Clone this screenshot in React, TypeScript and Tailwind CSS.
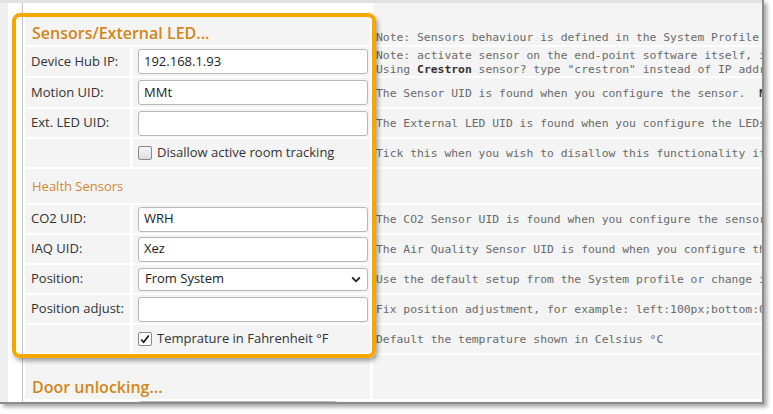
import React from "react";

const cell = "bg-[#f4f4f4]";
const label = `${cell} flex items-center pl-[6px] text-[13px] text-[#333] whitespace-nowrap`;
const desc = `${cell} flex items-center pl-[3px] overflow-hidden whitespace-pre text-[11.36px] leading-[14px] text-[#6a6a6a]`;
const inputCell = `${cell} flex items-center pl-[5px] pr-[2px]`;
const mono = { fontFamily: '"DejaVu Sans Mono", "Liberation Mono", monospace' };

function TextInput({ value }: { value: string }) {
  return (
    <div className="w-[230px] h-[25px] bg-white border border-[#b8b8b8] rounded-[3px] flex items-center pl-[5px] text-[13px] text-[#222]">
      {value}
    </div>
  );
}

function Check({ checked, text }: { checked: boolean; text: string }) {
  return (
    <div className="flex items-center gap-[5px] text-[13px] text-[#333]">
      <div
        className={`w-[14px] h-[14px] border border-[#8a8a8a] rounded-[2px] flex items-center justify-center ${
          checked ? "bg-white" : "bg-gradient-to-b from-[#f4f4f4] to-[#dedede]"
        }`}
      >
        {checked && (
          <svg width="12" height="12" viewBox="0 0 12 12">
            <path d="M2.2 6.4 L4.6 9.2 L9.8 2.4" fill="none" stroke="#111" strokeWidth="1.6" />
          </svg>
        )}
      </div>
      <span>{text}</span>
    </div>
  );
}

export default function App() {
  return (
    <div
      className="relative w-[773px] h-[414px] bg-white overflow-hidden"
      style={{ fontFamily: '"Open Sans", "Noto Sans", sans-serif' }}
    >
      <div className="w-[764px] h-[404px] border-r-2 border-b-2 border-[#8c8c8c] shadow-[3px_3px_4px_rgba(0,0,0,0.35)] flex flex-col overflow-hidden bg-white">
        <div className="h-[3px] shrink-0 bg-[#e2e2e2]" />
        <div className="flex flex-1 min-h-0">
          <div className="w-[8px] bg-[#efefef]" />
          <div className="w-[14px] bg-white" />
          <div className="w-px bg-[#c4c4c4]" />
          <div className="flex-1 min-w-0 pl-[2px] grid grid-cols-[105px_237px_minmax(0,1fr)] grid-rows-[10px_30px_29px_29px_28px_28px_34px_28px_28px_28px_28px_28px_44px_28px] gap-x-[3px] gap-y-[2px] content-start bg-white overflow-hidden">
            {/* top spacer */}
            <div className="col-span-2" />
            <div className={`${cell} row-span-2 flex items-end pb-[1px] pl-[3px] overflow-hidden whitespace-pre text-[11.36px] leading-[14px] text-[#6a6a6a]`} style={mono}>
              Note: Sensors behaviour is defined in the System Profile settings.
            </div>
            {/* header */}
            <div className={`${cell} col-span-2 flex items-end pl-[7px] text-[16px] leading-[23px] font-semibold text-[#d1861a] whitespace-nowrap`}>
              Sensors/External LED...
            </div>

            <div className={label}>Device Hub IP:</div>
            <div className={inputCell}><TextInput value="192.168.1.93" /></div>
            <div className={`${desc} flex-col !items-start justify-center`} style={mono}>
              <div>Note: activate sensor on the end-point software itself, if needed.</div>
              <div>
                Using <b className="text-[#333]">Crestron</b> sensor? type "crestron" instead of IP address.
              </div>
            </div>

            <div className={label}>Motion UID:</div>
            <div className={inputCell}><TextInput value="MMt" /></div>
            <div className={desc} style={mono}>
              {"The Sensor UID is found when you configure the sensor.  "}
              <b className="text-[#333]">Note:</b>
              {" see the manual."}
            </div>

            <div className={label}>Ext. LED UID:</div>
            <div className={inputCell}><TextInput value="" /></div>
            <div className={desc} style={mono}>
              The External LED UID is found when you configure the LEDs in the software.
            </div>

            <div className={cell} />
            <div className={inputCell}><Check checked={false} text="Disallow active room tracking" /></div>
            <div className={desc} style={mono}>
              Tick this when you wish to disallow this functionality if required.
            </div>

            <div className={`${cell} col-span-2 flex items-center pl-[7px] pt-[2px] text-[13px] text-[#d08a33]`}>
              Health Sensors
            </div>
            <div className={cell} />

            <div className={label}>CO2 UID:</div>
            <div className={inputCell}><TextInput value="WRH" /></div>
            <div className={desc} style={mono}>
              The CO2 Sensor UID is found when you configure the sensor in the software.
            </div>

            <div className={label}>IAQ UID:</div>
            <div className={inputCell}><TextInput value="Xez" /></div>
            <div className={desc} style={mono}>
              The Air Quality Sensor UID is found when you configure the sensor.
            </div>

            <div className={label}>Position:</div>
            <div className={inputCell}>
              <div className="w-[230px] h-[23px] bg-white border border-[#b8b8b8] rounded-[3px] flex items-center justify-between pl-[6px] pr-[6px] text-[13px] text-[#222]">
                <span>From System</span>
                <svg width="10" height="7" viewBox="0 0 10 7">
                  <path d="M1.2 1.5 L5 5.3 L8.8 1.5" fill="none" stroke="#222" strokeWidth="1.8" />
                </svg>
              </div>
            </div>
            <div className={desc} style={mono}>
              Use the default setup from the System profile or change it here.
            </div>

            <div className={label}>Position adjust:</div>
            <div className={inputCell}><TextInput value="" /></div>
            <div className={desc} style={mono}>
              Fix position adjustment, for example: left:100px;bottom:0px;
            </div>

            <div className={cell} />
            <div className={inputCell}><Check checked={true} text="Temprature in Fahrenheit °F" /></div>
            <div className={desc} style={mono}>
              Default the temprature shown in Celsius °C
            </div>

            <div className={`${cell} col-span-2 flex items-end pl-[7px] text-[16px] leading-[23px] font-semibold text-[#d1861a] whitespace-nowrap`}>
              Door unlocking...
            </div>
            <div className={cell} />

            <div className={cell} />
            <div className={`${cell} flex items-start pl-[5px]`}>
              <div className="w-[200px] h-[25px] bg-white border border-[#b8b8b8] rounded-[3px]" />
            </div>
            <div className={cell} />
          </div>
        </div>
      </div>

      {/* highlight box */}
      <div className="absolute left-[12px] top-[13px] w-[364px] h-[345px] border-4 border-[#f6a800] rounded-[8px] shadow-[2px_3px_4px_rgba(0,0,0,0.35)] pointer-events-none" />
    </div>
  );
}
